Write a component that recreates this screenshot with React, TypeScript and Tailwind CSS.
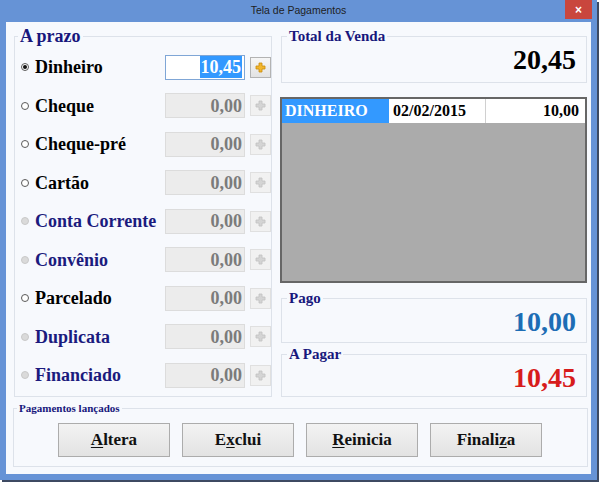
import type { ReactNode } from "react";

type Row = {
  label: string;
  value: string;
  active?: boolean;
  disabled?: boolean;
};

const ROWS: Row[] = [
  { label: "Dinheiro", value: "10,45", active: true },
  { label: "Cheque", value: "0,00" },
  { label: "Cheque-pré", value: "0,00" },
  { label: "Cartão", value: "0,00" },
  { label: "Conta Corrente", value: "0,00", disabled: true },
  { label: "Convênio", value: "0,00", disabled: true },
  { label: "Parcelado", value: "0,00" },
  { label: "Duplicata", value: "0,00", disabled: true },
  { label: "Financiado", value: "0,00", disabled: true },
];

const serif = "font-['Liberation_Serif',_'Times_New_Roman',_serif]";

function Group({
  title,
  legendClass,
  className = "",
  children,
}: {
  title: string;
  legendClass: string;
  className?: string;
  children: ReactNode;
}) {
  return (
    <fieldset className={`border border-[#dde2ea] ${className}`}>
      <legend className={`px-[2px] font-bold text-[#17177c] ${legendClass}`}>
        {title}
      </legend>
      {children}
    </fieldset>
  );
}

function PlusIcon({ active }: { active?: boolean }) {
  return (
    <svg width="11" height="11" viewBox="0 0 11 11">
      <path
        d="M4 1h3v3h3v3H7v3H4V7H1V4h3z"
        fill={active ? "#f2b62c" : "#d4d4d4"}
        stroke={active ? "#c98c0a" : "#c2c2c2"}
        strokeWidth="0.8"
      />
    </svg>
  );
}

function Radio({ checked, disabled }: { checked?: boolean; disabled?: boolean }) {
  if (disabled) {
    return (
      <span className="h-[8px] w-[8px] rounded-full border border-[#c9c9c9] bg-[#dadada]" />
    );
  }
  return (
    <span className="flex h-[8px] w-[8px] items-center justify-center rounded-full border border-[#5a5a5a] bg-white">
      {checked && <span className="h-[4px] w-[4px] rounded-full bg-[#111]" />}
    </span>
  );
}

function PaymentRow({ row }: { row: Row }) {
  return (
    <div className="flex h-[38.5px] items-center pl-[6px]">
      <Radio checked={row.active} disabled={row.disabled} />
      <span
        className={`ml-[6px] flex-1 text-[18px] font-bold leading-[22px] ${
          row.disabled ? "text-[#1b1b7e]" : "text-black"
        }`}
      >
        {row.label}
      </span>
      <div
        className={`flex h-[25px] w-[80px] items-center justify-end pr-[2px] text-[18px] font-bold leading-[22px] ${
          row.active
            ? "border border-[#7fa6d6] bg-white"
            : "border border-[#dcdcdc] bg-[#ececec] text-[#7b7b7b]"
        }`}
      >
        {row.active ? (
          <span className="bg-[#3399ff] px-px text-white">{row.value}</span>
        ) : (
          row.value
        )}
      </div>
      <div
        className={`ml-[5px] flex h-[21px] w-[21px] items-center justify-center border ${
          row.active
            ? "border-[#b3b3b3] bg-gradient-to-b from-[#f6f6f6] to-[#e3e3e3]"
            : "border-[#e0e0e0] bg-[#f1f1f1]"
        }`}
      >
        <PlusIcon active={row.active} />
      </div>
    </div>
  );
}

function Amount({ value, color }: { value: string; color: string }) {
  return (
    <div className={`pr-[10px] text-right text-[28px] font-bold leading-[30px] ${color}`}>
      {value}
    </div>
  );
}

function ActionButton({ pre, key1, post }: { pre: string; key1: string; post: string }) {
  return (
    <button className="h-[34px] w-[112px] border border-[#acacac] bg-gradient-to-b from-[#f3f3f3] to-[#e3e3e3] text-[17px] font-bold text-[#111]">
      {pre}
      <span className="underline underline-offset-2">{key1}</span>
      {post}
    </button>
  );
}

export default function App() {
  return (
    <div className="h-[484px] w-[601px] bg-white">
      <div className="flex h-[480px] w-[597px] flex-col bg-[#6693d6] shadow-[2px_2px_0_#3d4a62]">
        <div className="grid h-[22px] grid-cols-[1fr_auto_1fr] items-start">
          <div />
          <div className="pt-[4px] font-['Liberation_Sans',_Arial,_sans-serif] text-[10.5px] leading-[13px] text-[#1e1e1e]">
            Tela de Pagamentos
          </div>
          <div className="flex justify-end pr-[5px]">
            <div className="flex h-[19px] w-[27px] items-center justify-center bg-[#c9463d] font-['Liberation_Sans',_Arial,_sans-serif] text-[12px] font-bold leading-none text-white">
              ×
            </div>
          </div>
        </div>

        <div
          className={`mx-[6px] flex h-[452px] flex-col bg-[#f7f9fd] pl-[8px] pr-[4px] pt-[5px] pb-[7px] ${serif}`}
        >
          <div className="grid grid-cols-[258px_306px] gap-x-[9px]">
            <Group title="A prazo" legendClass="ml-[3px] text-[18px] leading-[18px]" className="h-[370px]">
              <div className="pt-[3px]">
                {ROWS.map((row) => (
                  <PaymentRow key={row.label} row={row} />
                ))}
              </div>
            </Group>

            <div className="mt-[1px] flex flex-col">
              <Group title="Total da Venda" legendClass="ml-[5px] text-[15px] leading-[16px]">
                <div className="pt-[1px] pb-[7px]">
                  <Amount value="20,45" color="text-black" />
                </div>
              </Group>

              <div className="-ml-px mt-[14px] flex h-[186px] flex-col border-2 border-[#666] bg-[#ababab]">
                <div className="flex h-[24px] items-center text-[16px] font-bold leading-[20px]">
                  <div className="flex h-full w-[107px] items-center bg-[#3399ff] pl-[3px] text-white">
                    DINHEIRO
                  </div>
                  <div className="flex h-full w-[97px] items-center border-r border-[#d0d0d0] bg-white pl-[4px] text-black">
                    02/02/2015
                  </div>
                  <div className="flex h-full flex-1 items-center justify-end bg-white pr-[6px] text-black">
                    10,00
                  </div>
                </div>
              </div>

              <Group title="Pago" legendClass="ml-[5px] text-[15px] leading-[16px]" className="mt-[7px]">
                <div className="pt-[1px] pb-[5px]">
                  <Amount value="10,00" color="text-[#1d6db5]" />
                </div>
              </Group>

              <Group title="A Pagar" legendClass="ml-[5px] text-[15px] leading-[16px]" className="mt-[3px]">
                <div className="pt-[1px] pb-[3px]">
                  <Amount value="10,45" color="text-[#d71c1c]" />
                </div>
              </Group>
            </div>
          </div>

          <Group
            title="Pagamentos lançados"
            legendClass="ml-[3px] text-[11px] leading-[12px]"
            className="-mx-px mt-[5px]"
          >
            <div className="flex gap-[12px] pl-[44px] pt-[9px] pb-[9px]">
              <ActionButton pre="" key1="A" post="ltera" />
              <ActionButton pre="E" key1="x" post="clui" />
              <ActionButton pre="" key1="R" post="einicia" />
              <ActionButton pre="Finali" key1="z" post="a" />
            </div>
          </Group>
        </div>
      </div>
    </div>
  );
}
